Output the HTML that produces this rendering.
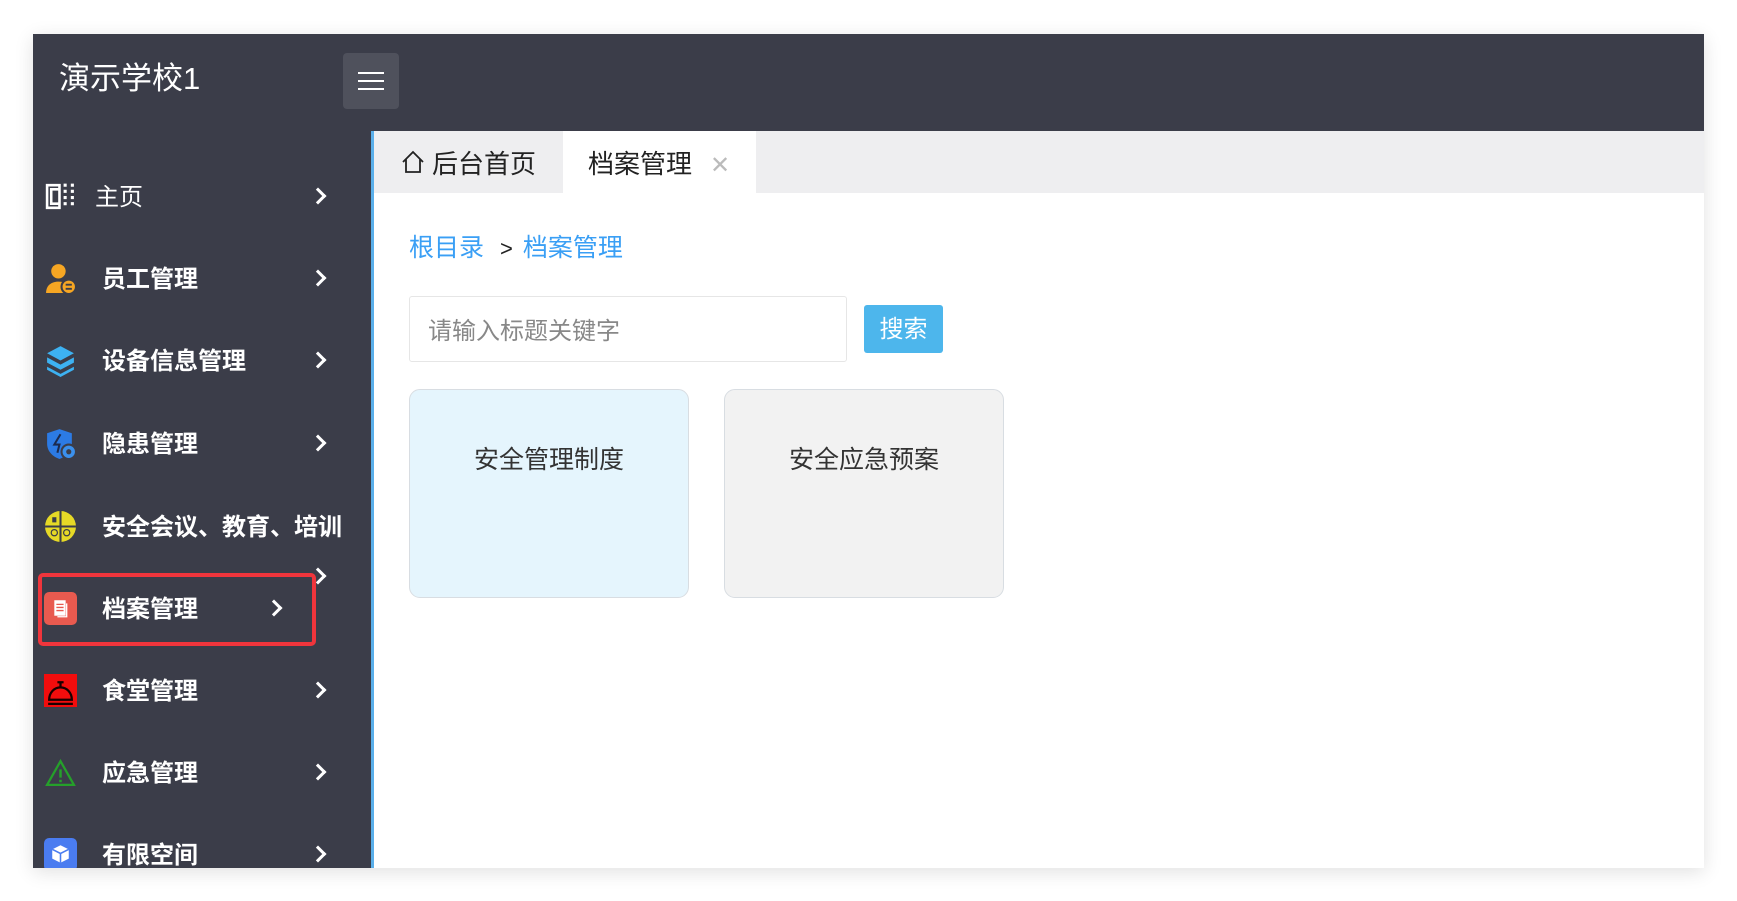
<!DOCTYPE html>
<html><head><meta charset="utf-8"><style>
*{margin:0;padding:0;box-sizing:border-box}
body{width:1737px;height:901px;background:#fff;position:relative;overflow:hidden;font-family:"Liberation Sans","Noto Sans CJK SC",sans-serif}
.frame{position:absolute;left:33px;top:34px;width:1671px;height:834px;background:#3b3d49;overflow:hidden;box-shadow:0 4px 18px rgba(0,0,0,.12)}
.title{position:absolute;left:26px;top:25px;color:#fff;font-size:31px;line-height:40px}
.ham{position:absolute;left:310px;top:19px;width:56px;height:56px;background:#4f515c;border-radius:4px}
.ham i{position:absolute;left:15px;width:26px;height:2px;background:#fff}
.content{position:absolute;left:338px;top:97px;right:0;bottom:0;background:#fff;border-left:3px solid #5aafea}
.tabs{position:absolute;left:0;top:0;right:0;height:62px;background:#eeeef0}
.tab{position:absolute;top:2px;height:62px;line-height:62px;font-size:26px;color:#222}
.t2{left:189px;width:193px;top:0;line-height:66px;background:#fff;padding-left:25px}
.bc{position:absolute;left:35px;top:97px;font-size:25px;color:#3a9ff5}
.bc b{font-weight:normal;color:#222;margin:0 10px 0 16px;font-size:22px}
.inp{position:absolute;left:35px;top:165px;width:438px;height:66px;border:1px solid #e6e6e6;border-radius:3px;font-size:24px;color:#888;line-height:70px;padding-left:18px}
.btn{position:absolute;left:490px;top:174px;width:79px;height:48px;background:#4db6ec;border-radius:3px;color:#fff;font-size:24px;line-height:50px;text-align:center}
.card{position:absolute;top:258px;width:280px;height:209px;border:1px solid #d8dde2;border-radius:11px;font-size:25px;color:#333;text-align:center;padding-top:50px}
.nav{position:absolute;left:0;width:305px;height:40px}
.nav .ic{position:absolute;left:11px;top:4px;width:33px;height:33px}
.nav .tx{position:absolute;left:69px;top:2px;line-height:40px;font-size:24px;color:#fff;font-weight:bold;white-space:nowrap}
.chev{position:absolute;width:12px;height:12px;border-right:3px solid #fff;border-top:3px solid #fff;transform:rotate(45deg)}
.redbox{position:absolute;left:5px;top:539px;width:278px;height:73px;border:4px solid #f0353c;border-radius:5px}
</style></head><body>
<div class="frame">
<div class="title">演示学校1</div>
<div class="ham"><i style="top:19px"></i><i style="top:27px"></i><i style="top:35px"></i></div>

<div class="nav" style="top:142px"><svg class="ic" viewBox="0 0 32 32"><path d="M3 5h12v22H3z M7 9h8v14H7z" fill="none" stroke="#fff" stroke-width="2.5"/><path d="M19 5h3M19 11h3M19 17h3M19 23h3M26 5h3M26 11h3M26 17h3M26 23h3" stroke="#fff" stroke-width="3"/></svg><div class="tx" style="left:62px;font-weight:normal">主页</div><div class="chev" style="left:279px;top:14px"></div></div>

<div class="nav" style="top:224px"><svg class="ic" viewBox="0 0 32 32"><circle cx="14" cy="9" r="7" fill="#f6a623"/><path d="M2 30c0-8 6-11 12-11s10 2 11 5v6z" fill="#f6a623"/><circle cx="24" cy="24" r="7" fill="#f6a623" stroke="#3b3d49" stroke-width="2"/><path d="M21 22h6M21 26h6" stroke="#3b3d49" stroke-width="1.8"/></svg><div class="tx">员工管理</div><div class="chev" style="left:279px;top:14px"></div></div>

<div class="nav" style="top:306px"><svg class="ic" viewBox="0 0 32 32"><path d="M16 2l13 7-13 7-13-7z" fill="#3db2f2"/><path d="M3 13l13 7 13-7v5l-13 7-13-7z" fill="#3db2f2"/><path d="M3 22l13 7 13-7v3l-13 7-13-7z" fill="#3db2f2"/></svg><div class="tx">设备信息管理</div><div class="chev" style="left:279px;top:14px"></div></div>

<div class="nav" style="top:389px"><svg class="ic" viewBox="0 0 32 32"><path d="M15 2l12 4v10c0 8-6 13-12 15C9 29 3 24 3 16V6z" fill="#2c7be5"/><path d="M16 7l-6 10h5l-2 8" fill="none" stroke="#1b2b50" stroke-width="2"/><circle cx="24" cy="24" r="7" fill="#3b90ec" stroke="#3b3d49" stroke-width="2"/><circle cx="24" cy="24" r="2.5" fill="#3b3d49"/></svg><div class="tx">隐患管理</div><div class="chev" style="left:279px;top:14px"></div></div>

<div class="nav" style="top:472px"><svg class="ic" viewBox="0 0 32 32"><circle cx="16" cy="16" r="15" fill="#e6d926"/><path d="M16 1v30M1 16h30" stroke="#3b3d49" stroke-width="2"/><circle cx="10" cy="22" r="3" fill="none" stroke="#3b3d49" stroke-width="1.2"/><circle cx="22" cy="22" r="3" fill="none" stroke="#3b3d49" stroke-width="1.2"/><rect x="8" y="7" width="4" height="5" fill="#3b3d49"/></svg><div class="tx">安全会议、教育、培训</div></div>
<div class="chev" style="left:279px;top:536px"></div>

<div class="redbox"></div>
<div class="nav" style="top:554px"><svg class="ic" viewBox="0 0 32 32"><rect x="0" y="0" width="32" height="32" rx="5" fill="#e85a4f"/><rect x="10" y="8" width="11" height="15" fill="#fff"/><path d="M12 12h7M12 15h7M12 18h7" stroke="#e85a4f" stroke-width="1.3"/><path d="M22 11v13H13" fill="none" stroke="#fff" stroke-width="1.3"/></svg><div class="tx">档案管理</div><div class="chev" style="left:235px;top:14px"></div></div>

<div class="nav" style="top:636px"><svg class="ic" viewBox="0 0 32 32"><rect width="32" height="34" fill="#f20d0d"/><path d="M5 25c0-7 5-12 11-12s11 5 11 12z" fill="none" stroke="#1a0000" stroke-width="2.2"/><path d="M4 29h24M16 13V9M13 8h6" stroke="#1a0000" stroke-width="2.2"/></svg><div class="tx">食堂管理</div><div class="chev" style="left:279px;top:14px"></div></div>

<div class="nav" style="top:718px"><svg class="ic" viewBox="0 0 32 32"><path d="M16 5L3 28h26z" fill="none" stroke="#25a02a" stroke-width="2.2"/><path d="M16 13v8M16 23v2.5" stroke="#25a02a" stroke-width="2.4"/></svg><div class="tx">应急管理</div><div class="chev" style="left:279px;top:14px"></div></div>

<div class="nav" style="top:800px"><svg class="ic" viewBox="0 0 32 32"><rect width="32" height="32" rx="5" fill="#4a7cf0"/><path d="M16 7l8 4v9l-8 4-8-4v-9z" fill="#fff"/><path d="M8 11l8 4 8-4M16 15v9" stroke="#4a7cf0" stroke-width="1.5" fill="none"/></svg><div class="tx">有限空间</div><div class="chev" style="left:279px;top:14px"></div></div>

<div class="content">
<div class="tabs">
<div class="tab" style="left:26px"><svg width="26" height="26" viewBox="0 0 26 26" style="vertical-align:-2px;margin-right:6px"><path d="M3 13L13 3l10 10M6 10v13h14V10" fill="none" stroke="#222" stroke-width="1.8"/></svg>后台首页</div>
<div class="tab t2">档案管理<span style="color:#bbb;font-size:24px;margin-left:18px">✕</span></div>
</div>
<div class="bc">根目录<b>&gt;</b>档案管理</div>
<div class="inp">请输入标题关键字</div>
<div class="btn">搜索</div>
<div class="card" style="left:35px;background:#e5f5fd">安全管理制度</div>
<div class="card" style="left:350px;background:#f2f2f2">安全应急预案</div>
</div>
</div>
</body></html>
